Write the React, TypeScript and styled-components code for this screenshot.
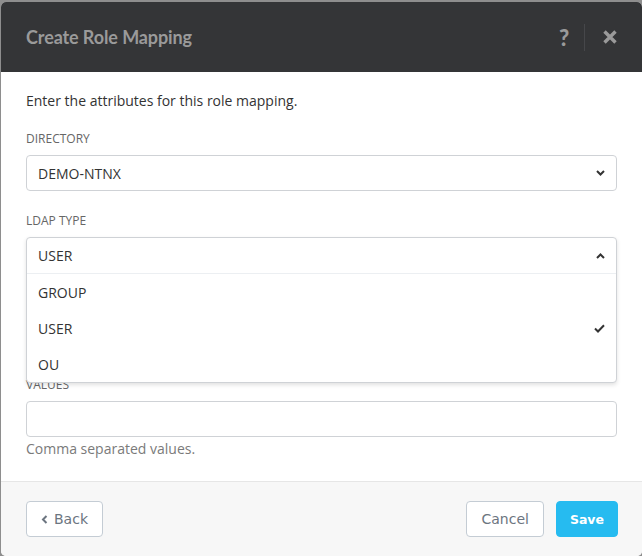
import React from "react";
import styled, { createGlobalStyle } from "styled-components";

const GlobalStyle = createGlobalStyle`
  html, body {
    margin: 0;
    padding: 0;
    background: #8e8e8e;
  }
  body {
    font-family: "Open Sans", Lato, sans-serif;
  }
`;

export default function App() {
  const ldapOptions = ["GROUP", "USER", "OU"];
  const selected = "USER";

  return (
    <>
      <GlobalStyle />
      <Page>
        <Modal>
          <Header>
            <Title>Create Role Mapping</Title>
            <HeaderActions>
              <HeaderIcon>?</HeaderIcon>
              <Separator />
              <HeaderIcon>
                <svg width="16" height="16" viewBox="0 0 16 16">
                  <path d="M2.5 2.5 L13.5 13.5 M13.5 2.5 L2.5 13.5" stroke="#9a9a9a" strokeWidth="3.4" strokeLinecap="butt" />
                </svg>
              </HeaderIcon>
            </HeaderActions>
          </Header>

          <Body>
            <Intro>Enter the attributes for this role mapping.</Intro>

            <Field>
              <Label>Directory</Label>
              <SelectBox>
                <span>DEMO-NTNX</span>
                <Chevron up={false} />
              </SelectBox>
            </Field>

            <Field>
              <Label>LDAP Type</Label>
              <SelectHolder>
                <OpenSelect>
                  <Trigger>
                    <span>{selected}</span>
                    <Chevron up />
                  </Trigger>
                  <Options>
                    {ldapOptions.map((o) => (
                      <Option key={o}>
                        <span>{o}</span>
                        {o === selected && (
                          <svg width="11" height="9" viewBox="0 0 11 9">
                            <path d="M1 4.5 L4 7.5 L10 1.2" stroke="#333" strokeWidth="2" fill="none" />
                          </svg>
                        )}
                      </Option>
                    ))}
                  </Options>
                </OpenSelect>
              </SelectHolder>
            </Field>

            {/* field covered by the open dropdown */}
            <Field aria-hidden>
              <Label />
              <SelectBox>
                <span />
                <Chevron up={false} />
              </SelectBox>
            </Field>

            <Field>
              <Label>Values</Label>
              <TextInput />
              <Help>Comma separated values.</Help>
            </Field>
          </Body>

          <Footer>
            <Button>
              <svg width="7" height="9" viewBox="0 0 7 9">
                <path d="M5.5 1 L2 4.5 L5.5 8" stroke="#6c7580" strokeWidth="2" fill="none" />
              </svg>
              Back
            </Button>
            <FooterRight>
              <Button>Cancel</Button>
              <Button primary>Save</Button>
            </FooterRight>
          </Footer>
        </Modal>
      </Page>
    </>
  );
}

function Chevron({ up }: { up: boolean }) {
  return (
    <ChevronSvg width="9" height="6" viewBox="0 0 9 6">
      {up ? (
        <path d="M1 5 L4.5 1.5 L8 5" stroke="#333" strokeWidth="2" fill="none" />
      ) : (
        <path d="M1 1 L4.5 4.5 L8 1" stroke="#333" strokeWidth="2" fill="none" />
      )}
    </ChevronSvg>
  );
}

const Page = styled.div`
  width: 642px;
  height: 556px;
  overflow: hidden;
  padding: 2px 0 0 1px;
  box-sizing: border-box;
`;

const Modal = styled.div`
  width: 641px;
  height: 554px;
  border-radius: 5px;
  overflow: hidden;
  background: #fff;
  display: flex;
  flex-direction: column;
`;

const Header = styled.div`
  height: 70px;
  flex: none;
  background: #343537;
  display: flex;
  align-items: center;
  justify-content: space-between;
  padding: 0 24px 0 25px;
`;

const Title = styled.h1`
  margin: 0;
  font-family: Lato, sans-serif;
  font-size: 18px;
  font-weight: 700;
  color: #9a9a9a;
  letter-spacing: -0.1px;
`;

const HeaderActions = styled.div`
  display: flex;
  align-items: center;
`;

const HeaderIcon = styled.span`
  display: flex;
  align-items: center;
  justify-content: center;
  width: 16px;
  font-family: Lato, sans-serif;
  font-size: 22px;
  font-weight: 900;
  color: #9a9a9a;
`;

const Separator = styled.span`
  width: 1px;
  height: 27px;
  background: #46474a;
  margin: 0 17px 0 12px;
`;

const Body = styled.div`
  flex: 1;
  padding: 20px 25px 0 25px;
  display: flex;
  flex-direction: column;
`;

const Intro = styled.p`
  margin: 0 0 22px;
  font-size: 14px;
  color: #333;
  line-height: 18px;
`;

const Field = styled.div`
  display: flex;
  flex-direction: column;
  margin-bottom: 23px;
`;

const Label = styled.label`
  font-size: 12px;
  text-transform: uppercase;
  color: #666;
  line-height: 14px;
  height: 14px;
  margin-bottom: 9px;
`;

const SelectBox = styled.div`
  height: 36px;
  box-sizing: border-box;
  border: 1px solid #cfd2d6;
  border-radius: 4px;
  display: flex;
  align-items: center;
  justify-content: space-between;
  padding: 0 11px 0 11px;
  font-size: 14px;
  color: #333;
  background: #fff;
`;

const ChevronSvg = styled.svg`
  flex: none;
`;

const SelectHolder = styled.div`
  position: relative;
  height: 36px;
`;

const OpenSelect = styled.div`
  position: absolute;
  top: 0;
  left: 0;
  right: 0;
  z-index: 2;
  background: #fff;
  border: 1px solid #cfd2d6;
  border-radius: 4px;
  box-shadow: 0 2px 4px rgba(0, 0, 0, 0.12);
`;

const Trigger = styled.div`
  height: 35px;
  display: flex;
  align-items: center;
  justify-content: space-between;
  padding: 0 11px;
  font-size: 14px;
  color: #333;
  border-bottom: 1px solid #eceff2;
`;

const Options = styled.div`
  display: flex;
  flex-direction: column;
`;

const Option = styled.div`
  height: 36px;
  display: flex;
  align-items: center;
  justify-content: space-between;
  padding: 0 11px;
  font-size: 14px;
  color: #333;
`;

const TextInput = styled.input`
  height: 36px;
  box-sizing: border-box;
  border: 1px solid #cfd2d6;
  border-radius: 4px;
  outline: none;
`;

const Help = styled.div`
  margin-top: 3px;
  font-size: 14px;
  line-height: 18px;
  color: #7a7a7a;
`;

const Footer = styled.div`
  height: 75px;
  flex: none;
  background: #f7f7f7;
  border-top: 1px solid #e6e6e6;
  display: flex;
  align-items: flex-start;
  justify-content: space-between;
  padding: 19px 24px 0 25px;
  box-sizing: border-box;
`;

const FooterRight = styled.div`
  display: flex;
  gap: 12px;
`;

const Button = styled.button<{ primary?: boolean }>`
  height: 36px;
  box-sizing: border-box;
  padding: 0 ${(p) => (p.primary ? 13 : 14)}px;
  border-radius: 4px;
  border: 1px solid ${(p) => (p.primary ? "#26bbf0" : "#c4ccd4")};
  background: ${(p) => (p.primary ? "#26bbf0" : "#fff")};
  color: ${(p) => (p.primary ? "#fff" : "#6c7580")};
  font-family: "DejaVu Sans", Verdana, sans-serif;
  font-size: ${(p) => (p.primary ? 12.5 : 14)}px;
  font-weight: ${(p) => (p.primary ? 700 : 400)};
  display: flex;
  align-items: center;
  gap: 6px;
`;
